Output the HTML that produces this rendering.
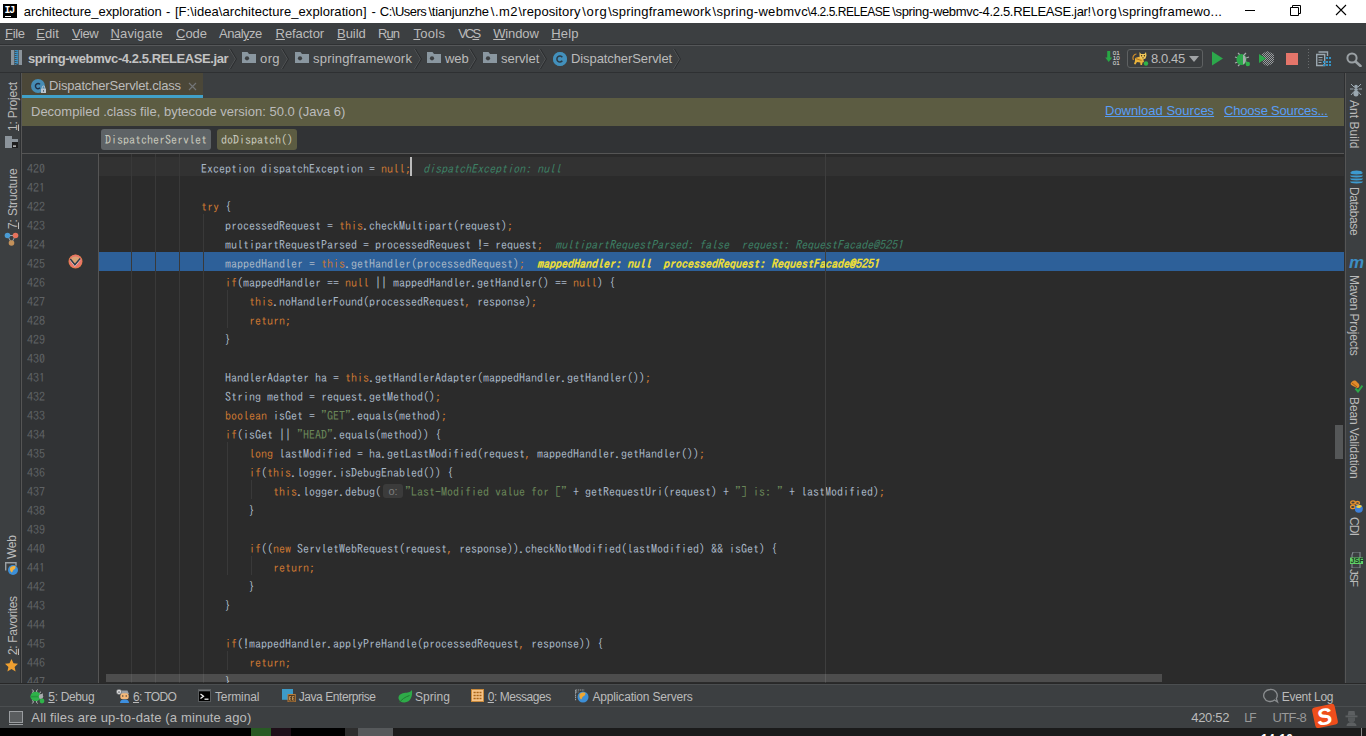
<!DOCTYPE html>
<html lang="en">
<head>
<meta charset="utf-8">
<title>architecture_exploration - DispatcherServlet.class</title>
<style>
*{box-sizing:border-box;margin:0;padding:0}
html,body{width:1366px;height:736px;overflow:hidden;background:#3c3f41}
body{position:relative;font-family:"Liberation Sans", "DejaVu Sans", sans-serif;font-size:13px;color:#bbbbbb;-webkit-font-smoothing:antialiased}
.abs{position:absolute}
u{text-decoration:underline;text-underline-offset:1px}
.vt u{text-underline-offset:0.5px}
/* title bar */
#title{position:absolute;left:0;top:0;width:1366px;height:23px;background:#ffffff;color:#000}
#title .txt{position:absolute;left:0;top:4px;font-size:13px;line-height:16px;white-space:pre}
#title .txt span{position:absolute;top:0;white-space:pre}
#ij{position:absolute;left:3px;top:4px;width:14px;height:14px;background:#000}
#ij b{position:absolute;left:1.5px;top:1.5px;font-family:'Liberation Mono',monospace;font-size:10px;line-height:9px;color:#fff;font-weight:bold;letter-spacing:-1.2px}
#ij i{position:absolute;left:2px;top:11.5px;width:6px;height:1px;background:#fff}
/* menu */
#menu{position:absolute;left:0;top:23px;width:1366px;height:22px;background:#3c3f41;border-bottom:1px solid #2f3133}
#menu span{position:absolute;top:2px;line-height:17px;font-size:13px;color:#bbbbbb;white-space:pre}
/* nav bar */
#nav{position:absolute;left:0;top:45px;width:1366px;height:28px;background:#3c3f41;border-top:1px solid #555759;border-bottom:1px solid #2e3032}
#nav .t{position:absolute;top:4px;line-height:17px;font-size:13px;color:#bbbbbb;white-space:pre}
/* strips */
#lstrip{position:absolute;left:0;top:73px;width:21px;height:611px;background:#3c3f41;border-right:1px solid #2e3032}
#rstrip{position:absolute;left:1344px;top:73px;width:22px;height:611px;background:#3c3f41;border-left:1px solid #2e3032}
.vt{position:absolute;white-space:pre;font-size:12px;line-height:14px;color:#bbbbbb;transform-origin:0 0}
/* tabs */
#tabs{position:absolute;left:22px;top:73px;width:1322px;height:25px;background:#3c3f41}
#tab{position:absolute;left:0;top:0;width:181px;height:25px;background:#4b4738;border-bottom:3px solid #41a0c8}
#tab .t{position:absolute;left:27px;top:5px;font-size:13px;line-height:16px;color:#bbbbbb;white-space:pre;letter-spacing:-0.17px}
/* banner */
#banner{position:absolute;left:22px;top:98px;width:1322px;height:28px;background:#5c5c42}
#banner .t{position:absolute;left:9px;top:6px;font-size:13px;line-height:16px;color:#bbbbbb;white-space:pre}
#banner a{position:absolute;top:5px;font-size:13px;line-height:16px;color:#589df6;text-decoration:underline;white-space:pre}
/* crumbs */
#crumbs{position:absolute;left:22px;top:126px;width:1322px;height:28px;background:#313335;border-bottom:1px solid #555555}
#crumbs span{position:absolute;top:3px;height:21px;line-height:21px;font-family:"IPAGothic", "Liberation Mono", monospace;font-size:12px;color:#c9c9bd;padding:0 4px;border-radius:3px;white-space:pre}
/* editor */
#ed{position:absolute;left:22px;top:154px;width:1322px;height:529px;background:#2b2b2b;overflow:hidden}
#gutter{position:absolute;left:0;top:0;width:77px;height:531px;background:#313335;border-right:1px solid #555555}
.row{position:absolute;left:0;width:1322px;height:19px}
.row.caret::before{content:"";position:absolute;left:77px;top:0;width:1245px;height:19px;background:#323232}
.row.exec::before{content:"";position:absolute;left:77px;top:0;width:1245px;height:19px;background:#2d6099}
.ln{position:absolute;left:5px;top:0;height:19px;line-height:22px;font-family:"IPAGothic", "Liberation Mono", monospace;font-size:12px;color:#606366}
.c{position:absolute;left:83px;top:0;height:19px;line-height:22px;font-family:"IPAGothic", "Liberation Mono", monospace;font-size:12px;color:#a9b7c6;white-space:pre}
.k{color:#cc7832}
.s{color:#6a8759}
.hint{color:#3d8065;font-style:italic;margin-left:12px}
.hint.hx{color:#f5e232;font-weight:normal;-webkit-text-stroke:0.45px #f5e232}
.ph{display:inline-block;background:#3b3b3b;color:#7d7d7d;border-radius:3px;font-size:11px;width:20px;text-align:center;margin:0 2px 0 2px;line-height:14px;height:14px;vertical-align:1px;font-family:"Liberation Sans", "DejaVu Sans", sans-serif}
.cur{position:absolute;left:388px;top:0;width:2px;height:19px;background:#bbbbbb}
.guide{position:absolute;width:1px;background:#393939}
/* bottom */
#tools{position:absolute;left:0;top:683px;width:1366px;height:23px;background:#3c3f41;border-top:1px solid #282828;box-shadow:inset 0 1px 0 #4b4e50}
#tools .t{position:absolute;top:5px;font-size:12px;line-height:16px;color:#bbbbbb;white-space:pre}
#status{position:absolute;left:0;top:706px;width:1366px;height:22px;background:#3c3f41;border-top:1px solid #4b4e50}
#status .t{position:absolute;top:3px;font-size:13px;line-height:16px;color:#bbbbbb;white-space:pre}
#taskbar{position:absolute;left:0;top:728px;width:1366px;height:8px;background:#1b1b1b}
</style>
</head>
<body>
<div id="title"><div id="ij"><b>IJ</b><i></i></div><div class="txt"><span style="left:23.700px;letter-spacing:-0.03px">architecture_exploration</span><span style="left:166px;letter-spacing:0px">-</span><span style="left:174.9px;letter-spacing:0.07px">[F:\idea\architecture_exploration]</span><span style="left:371.5px;letter-spacing:0px">-</span><span style="left:379.8px;letter-spacing:-0.51px">C:\Users</span><span style="left:428.4px;letter-spacing:-0.22px">\tianjunzhe</span><span style="left:490.8px;letter-spacing:0.47px">\.m2</span><span style="left:518.5px;letter-spacing:0.12px">\repository</span><span style="left:582.2px;letter-spacing:0.73px">\org</span><span style="left:608.3px;letter-spacing:0.2px">\springframework</span><span style="left:712.6px;letter-spacing:0.31px">\spring-webmvc</span><span style="left:807.600px;letter-spacing:-0.46px;font-size:12px">\4.2.5.RELEASE</span><span style="left:892.2px;letter-spacing:-0.33px">\spring-webmvc-4.2.5.RELEASE.jar!</span><span style="left:1092px;letter-spacing:0.8px">\org</span><span style="left:1118.3px;letter-spacing:0.24px">\springframewo...</span></div><svg class="abs" style="left:1240px;top:0" width="120" height="23" viewBox="0 0 120 23"><path d="M5 10.500h10" stroke="#000" stroke-width="1"/><path d="M50.500 7.500h8v8h-8z M52.500 7.500v-2h8v8h-2" fill="none" stroke="#000" stroke-width="1"/><path d="M96 5l10 10M106 5l-10 10" stroke="#000" stroke-width="1.100"/></svg></div>
<div id="menu"><span style="left:5.1px;letter-spacing:-0.33px"><u>F</u>ile</span><span style="left:36.3px;letter-spacing:0.07px"><u>E</u>dit</span><span style="left:72px;letter-spacing:-0.47px"><u>V</u>iew</span><span style="left:110.6px;letter-spacing:0.11px"><u>N</u>avigate</span><span style="left:176px;letter-spacing:0px"><u>C</u>ode</span><span style="left:219px;letter-spacing:-0.5px">Anal<u>y</u>ze</span><span style="left:275.6px;letter-spacing:-0.09px"><u>R</u>efactor</span><span style="left:337px;letter-spacing:-0.05px"><u>B</u>uild</span><span style="left:378px;letter-spacing:-1.0px">R<u>u</u>n</span><span style="left:413.4px;letter-spacing:0.3px"><u>T</u>ools</span><span style="left:458.2px;letter-spacing:-1.9px">VC<u>S</u></span><span style="left:493.2px;letter-spacing:-0.12px"><u>W</u>indow</span><span style="left:551.3px;letter-spacing:0.13px"><u>H</u>elp</span></div>
<div id="nav">
<svg class="abs" style="left:11px;top:4px" width="11" height="15" viewBox="0 0 11 15"><rect x="0" y="0" width="3.300" height="15" fill="#8b949c"/><rect x="7.700" y="0" width="3.300" height="15" fill="#8b949c"/><path d="M3.800 0.500h3.400M3.800 2.500l3.400-1M3.800 2.500h3.400M3.800 4.500l3.400-1M3.800 4.500h3.400M3.800 6.500l3.400-1M3.800 6.500h3.400M3.800 8.500l3.400-1M3.800 8.500h3.400M3.800 10.500l3.400-1M3.800 10.500h3.400M3.800 12.500l3.400-1M3.800 12.500h3.400M3.800 14.500l3.400-1" fill="none" stroke="#3aa0dc" stroke-width="0.800"/></svg>
<span class="t" style="left:28px;font-weight:bold;letter-spacing:-0.42px;color:#c3c3c3">spring-webmvc-4.2.5.RELEASE.jar</span>
<svg class="abs" style="left:229px;top:0" width="9" height="26" viewBox="0 0 9 26"><path d="M0.500 3L6.500 13L0.500 23" fill="none" stroke="#515456" stroke-width="1"/><path d="M1.500 3L7.500 13L1.500 23" fill="none" stroke="#2b2d2f" stroke-width="1"/></svg>
<svg class="abs" style="left:242px;top:6px" width="14" height="11" viewBox="0 0 14 11"><path d="M0 0h5.500l1.500 2h7v9h-14z" fill="#8a97a0"/><circle cx="5" cy="6.300" r="2.100" fill="#3c3f41"/></svg><span class="t" style="left:260px;letter-spacing:0.4px">org</span>
<svg class="abs" style="left:281px;top:0" width="9" height="26" viewBox="0 0 9 26"><path d="M0.500 3L6.500 13L0.500 23" fill="none" stroke="#515456" stroke-width="1"/><path d="M1.500 3L7.500 13L1.500 23" fill="none" stroke="#2b2d2f" stroke-width="1"/></svg>
<svg class="abs" style="left:295px;top:6px" width="14" height="11" viewBox="0 0 14 11"><path d="M0 0h5.500l1.500 2h7v9h-14z" fill="#8a97a0"/><circle cx="5" cy="6.300" r="2.100" fill="#3c3f41"/></svg><span class="t" style="left:313px;letter-spacing:0.2px">springframework</span>
<svg class="abs" style="left:414px;top:0" width="9" height="26" viewBox="0 0 9 26"><path d="M0.500 3L6.500 13L0.500 23" fill="none" stroke="#515456" stroke-width="1"/><path d="M1.500 3L7.500 13L1.500 23" fill="none" stroke="#2b2d2f" stroke-width="1"/></svg>
<svg class="abs" style="left:427px;top:6px" width="14" height="11" viewBox="0 0 14 11"><path d="M0 0h5.500l1.500 2h7v9h-14z" fill="#8a97a0"/><circle cx="5" cy="6.300" r="2.100" fill="#3c3f41"/></svg><span class="t" style="left:445px;letter-spacing:-0.1px">web</span>
<svg class="abs" style="left:469px;top:0" width="9" height="26" viewBox="0 0 9 26"><path d="M0.500 3L6.500 13L0.500 23" fill="none" stroke="#515456" stroke-width="1"/><path d="M1.500 3L7.500 13L1.500 23" fill="none" stroke="#2b2d2f" stroke-width="1"/></svg>
<svg class="abs" style="left:483px;top:6px" width="14" height="11" viewBox="0 0 14 11"><path d="M0 0h5.500l1.500 2h7v9h-14z" fill="#8a97a0"/><circle cx="5" cy="6.300" r="2.100" fill="#3c3f41"/></svg><span class="t" style="left:501px">servlet</span>
<svg class="abs" style="left:539px;top:0" width="9" height="26" viewBox="0 0 9 26"><path d="M0.500 3L6.500 13L0.500 23" fill="none" stroke="#515456" stroke-width="1"/><path d="M1.500 3L7.500 13L1.500 23" fill="none" stroke="#2b2d2f" stroke-width="1"/></svg>
<svg class="abs" style="left:553px;top:6px" width="14" height="14" viewBox="0 0 14 14"><circle cx="7" cy="7" r="7" fill="#3e86a0"/><circle cx="7" cy="7" r="7" fill="#4390bc"/><path d="M9.3 5.2A3 3 0 1 0 9.3 8.8" fill="none" stroke="#2b3a44" stroke-width="1.5"/></svg>
<span class="t" style="left:571px;letter-spacing:-0.09px">DispatcherServlet</span>
<svg class="abs" style="left:673px;top:0" width="9" height="26" viewBox="0 0 9 26"><path d="M0.500 3L6.500 13L0.500 23" fill="none" stroke="#515456" stroke-width="1"/><path d="M1.500 3L7.500 13L1.500 23" fill="none" stroke="#2b2d2f" stroke-width="1"/></svg>
<!-- right tools -->
<svg class="abs" style="left:1104px;top:4px" width="18" height="16" viewBox="0 0 18 16"><path d="M3.200 1h3v6.500h2L4.700 12 1.200 7.500h2z" fill="#28a745"/><g font-family="Liberation Sans, sans-serif" font-size="5.500" fill="#e2e2e2"><text x="8.800" y="5" textLength="7" lengthAdjust="spacingAndGlyphs">01</text><text x="8.800" y="10" textLength="7" lengthAdjust="spacingAndGlyphs">10</text><text x="8.800" y="15" textLength="7" lengthAdjust="spacingAndGlyphs">01</text></g></svg>
<div class="abs" style="left:1127px;top:3px;width:76px;height:19px;border:1px solid #5e6162;border-radius:3px;background:#393c3e"></div>
<svg class="abs" style="left:1132px;top:5px" width="17" height="15" viewBox="0 0 17 15"><path d="M1.500 9c-1.500-3 0.500-6 3-6" fill="none" stroke="#c98a2a" stroke-width="1.200"/><path d="M3 7l5-1.500 3 1.500 1 4-1.500 0.500-0.500 2.500h-1.500l-0.300-2.500-3.200-0.500-1.500 2.500-1.500-0.500 1-3z" fill="#e8b23c"/><path d="M3.500 7.500l6 2" stroke="#b5761a" stroke-width="1" fill="none"/><path d="M7.500 1l1.500 2h3.500l1.500-2 0.500 3.500-1 3-2.500 1-2.500-1-1-3z" fill="#f2c95a"/><circle cx="9.600" cy="4.800" r="0.700" fill="#3a2a10"/><circle cx="12.400" cy="4.800" r="0.700" fill="#3a2a10"/><path d="M10 6.500l1 0.700 1-0.700" stroke="#3a2a10" stroke-width="0.600" fill="none"/><circle cx="14" cy="12.500" r="2.200" fill="#2fb34a"/></svg>
<span class="t" style="left:1151px;letter-spacing:-0.4px">8.0.45</span>
<svg class="abs" style="left:1189px;top:10px" width="10" height="6" viewBox="0 0 10 6"><path d="M0 0h10L5 6z" fill="#a0a3a5"/></svg>
<svg class="abs" style="left:1211px;top:5px" width="12" height="15" viewBox="0 0 12 15"><path d="M1 0.500L12 7.500 1 14.500z" fill="#2ca84b"/></svg>
<svg class="abs" style="left:1234px;top:5px" width="18" height="16" viewBox="0 0 18 16"><path d="M4 2l2 2M12 2l-2 2M1 6l3 1M1 12l3-1M4 15l2-2M15 6l-3 1M15 12l-3-1" stroke="#a8abad" stroke-width="1.200" fill="none"/><ellipse cx="7.500" cy="8.500" rx="5" ry="5.500" fill="#2ca84b"/><path d="M9 3.500a5 5.500 0 0 1 0 10z" fill="#a8abad"/><circle cx="13.800" cy="13" r="2.200" fill="#2fb34a"/></svg>
<svg class="abs" style="left:1259px;top:5px" width="16" height="15" viewBox="0 0 16 15"><defs><pattern id="chk" width="2" height="2" patternUnits="userSpaceOnUse"><rect width="1" height="1" fill="#9a9d9f"/><rect x="1" y="1" width="1" height="1" fill="#9a9d9f"/></pattern></defs><path d="M8 0l7 3v6c0 3-3 5-7 6c-3-1-5-3-5-6v-6z" fill="url(#chk)"/><path d="M0 3l7 4.500L0 12z" fill="#2ca84b"/></svg>
<div class="abs" style="left:1286px;top:6.500px;width:12px;height:12px;background:#e5756a"></div>
<div class="abs" style="left:1308px;top:3px;width:1px;height:20px;background:repeating-linear-gradient(#6a6d6f 0 1px,transparent 1px 3px)"></div>
<svg class="abs" style="left:1316px;top:5px" width="15" height="16" viewBox="0 0 15 16"><path d="M2.500 1h9v4" fill="none" stroke="#9aa7b0" stroke-width="1.400"/><path d="M0.700 3.500h8v11h-8z" fill="none" stroke="#9aa7b0" stroke-width="1.400"/><path d="M2.500 6.500h4M2.500 9h4M2.500 11.500h3" stroke="#9aa7b0" stroke-width="1.200"/><g fill="#3592c4"><rect x="10" y="6" width="2" height="2"/><rect x="13" y="6" width="2" height="2"/><rect x="7" y="10" width="2" height="2"/><rect x="10" y="10" width="2" height="2"/><rect x="13" y="10" width="2" height="2"/><rect x="7" y="13" width="2" height="2"/><rect x="10" y="13" width="2" height="2"/><rect x="13" y="13" width="2" height="2"/></g></svg>
<svg class="abs" style="left:1346px;top:6px" width="16" height="15" viewBox="0 0 16 15"><circle cx="6" cy="6" r="4.600" fill="none" stroke="#9aa0a4" stroke-width="2"/><path d="M9.500 9.500L14.500 14" stroke="#9aa0a4" stroke-width="2.600" stroke-linecap="round"/></svg>
</div>
<div id="lstrip">
<span class="vt" style="left:6px;top:58px;transform:rotate(-90deg);letter-spacing:-0.17px"><u>1</u>: Project</span>
<svg class="abs" style="left:5px;top:63px" width="13" height="12" viewBox="0 0 13 12"><path d="M0 0h7v3h6v5h-6v4h-7z" fill="#8c949b"/><rect x="7" y="6" width="6" height="6" fill="#1e1e1e"/><rect x="8" y="9.500" width="3" height="1.200" fill="#e8e8e8"/></svg>
<span class="vt" style="left:6px;top:156px;transform:rotate(-90deg);letter-spacing:-0.12px"><u>7</u>: Structure</span>
<svg class="abs" style="left:4px;top:159px" width="15" height="15" viewBox="0 0 15 15"><path d="M3.500 3.500h8M3.500 3.500l4 7.500M11.500 3.500l-4 7.500" stroke="#9aa7b0" stroke-width="1" fill="none"/><circle cx="3.500" cy="3.500" r="2.800" fill="#4a9bd4"/><circle cx="11.500" cy="3.500" r="2.800" fill="#e8735c"/><circle cx="7.500" cy="11" r="2.800" fill="#c4915a"/></svg>
<span class="vt" style="left:5px;top:486px;transform:rotate(-90deg);letter-spacing:-0.30px">Web</span>
<svg class="abs" style="left:4px;top:488px" width="15" height="15" viewBox="0 0 15 15"><path d="M1.700 9.500V1.700h10.300v3" fill="none" stroke="#9aa0a4" stroke-width="1.400"/><circle cx="9" cy="9" r="5" fill="#3d8fd6"/><path d="M6 7c1-2 3.500-2.500 5.500-1.800c0.300 1.800-0.500 3-2 3.500c-0.800 1-0.800 2.300-1.800 2.800c-1-1-2.200-2.700-1.700-4.500z" fill="#f5b13c"/></svg>
<span class="vt" style="left:6px;top:582px;transform:rotate(-90deg);letter-spacing:-0.33px"><u>2</u>: Favorites</span>
<svg class="abs" style="left:5px;top:586px" width="13" height="13" viewBox="0 0 13 13"><path d="M6.500 0l2 4.300 4.500 0.500-3.400 3.100 1 4.600-4.100-2.400-4.100 2.400 1-4.600L0 4.800l4.500-0.500z" fill="#f0a030"/></svg>
</div>
<div id="rstrip">
<svg class="abs" style="left:5px;top:10px" width="12" height="14" viewBox="0 0 12 14"><path d="M1 1l3 3M11 1l-3 3M0 6h3.500M12 6h-3.500M1 12l3-3.500M11 12l-3-3.500M3 3l1.500 1.500M9 3l-1.500 1.500" stroke="#9aa7b0" stroke-width="1" fill="none"/><circle cx="6" cy="3.500" r="1.800" fill="#9aa7b0"/><ellipse cx="6" cy="6.500" rx="1.800" ry="1.600" fill="#9aa7b0"/><ellipse cx="6" cy="10.500" rx="2.600" ry="3" fill="#9aa7b0"/></svg>
<span class="vt" style="left:15.5px;top:27px;transform:rotate(90deg);letter-spacing:0.05px">Ant Build</span>
<svg class="abs" style="left:5px;top:97px" width="13" height="14" viewBox="0 0 13 14"><g fill="none" stroke="#3d9bd0" stroke-width="2"><path d="M1 2.500c0 1.300 11 1.300 11 0M1 5.500c0 1.300 11 1.300 11 0M1 8.500c0 1.300 11 1.300 11 0M1 11.500c0 1.300 11 1.300 11 0"/></g><ellipse cx="6.500" cy="2.200" rx="5.500" ry="1.700" fill="#3d9bd0"/></svg>
<span class="vt" style="left:15.5px;top:114px;transform:rotate(90deg);letter-spacing:-0.40px">Database</span>
<span class="abs" style="left:4px;top:184px;font:italic bold 17px 'Liberation Sans',sans-serif;color:#3d8ec4;line-height:12px;height:12px">m</span>
<span class="vt" style="left:15.5px;top:202px;transform:rotate(90deg);letter-spacing:-0.15px">Maven Projects</span>
<svg class="abs" style="left:5px;top:307px" width="13" height="13" viewBox="0 0 13 13"><path d="M1 3c1-2 3-3 5-2l3 3c1 2 0 4-2 4l-4-2c-2-1-3-2-2-3z" fill="#e08a2a"/><path d="M2 3l5 4" stroke="#a85a10" stroke-width="1"/><path d="M5.500 8.500l2.500 3 4.500-6" fill="none" stroke="#2ea84a" stroke-width="2"/></svg>
<span class="vt" style="left:15.5px;top:324px;transform:rotate(90deg);letter-spacing:-0.10px">Bean Validation</span>
<svg class="abs" style="left:5px;top:427px" width="13" height="13" viewBox="0 0 13 13"><ellipse cx="3" cy="2.500" rx="2.300" ry="1.700" fill="none" stroke="#e8932c" stroke-width="1.300"/><ellipse cx="2.800" cy="7" rx="2.300" ry="1.700" fill="none" stroke="#e8932c" stroke-width="1.300"/><ellipse cx="7.500" cy="3" rx="2" ry="1.500" fill="none" stroke="#e8932c" stroke-width="1.300"/><circle cx="8.800" cy="8.800" r="4" fill="#3d7fd8"/><path d="M6 7c1-2 4-3 6-1c-1 2-4 3-6 1z" fill="#f5d23a"/></svg>
<span class="vt" style="left:15.5px;top:444px;transform:rotate(90deg);letter-spacing:-0.80px">CDI</span>
<svg class="abs" style="left:4.500px;top:479px" width="14" height="16" viewBox="0 0 14 16"><path d="M3 0h7v16h-8v-13z" fill="none" stroke="#7d858b" stroke-width="1.200"/><rect x="0" y="5.500" width="13" height="6.500" fill="#5fd068"/><text x="0.600" y="11" font-family="Liberation Sans, sans-serif" font-size="7" font-weight="bold" fill="#1c3a1e" textLength="12.800" lengthAdjust="spacingAndGlyphs">JSF</text></svg>
<span class="vt" style="left:15.5px;top:495.500px;transform:rotate(90deg);letter-spacing:-1.20px;font-size:11.5px">JSF</span>
</div>
<div id="tabs"><div id="tab"><svg class="abs" style="left:9px;top:6px" width="16" height="16" viewBox="0 0 16 16"><circle cx="7" cy="7" r="7" fill="#468cb4"/><path d="M9 5.400A2.600 2.600 0 1 0 9 8.800" fill="none" stroke="#1f2f45" stroke-width="1.400"/><path d="M11.300 9.500v-1.300a1.200 1.200 0 0 1 2.400 0v1.300" fill="none" stroke="#b8c4d0" stroke-width="1"/><rect x="10" y="9.500" width="5" height="4.500" fill="#b8c4d0"/><rect x="12" y="11" width="1" height="1.800" fill="#5a6a78"/></svg><span class="t">DispatcherServlet.class</span><svg class="abs" style="left:166px;top:9px" width="9" height="9" viewBox="0 0 9 9"><path d="M1 1l7 7M8 1l-7 7" stroke="#737577" stroke-width="1.200"/></svg></div></div>
<div id="banner"><span class="t">Decompiled .class file, bytecode version: 50.0 (Java 6)</span><a style="left:1083px">Download Sources</a><a style="left:1202px;letter-spacing:-0.19px">Choose Sources...</a></div>
<div id="crumbs"><span style="left:79px;background:#5e6366">DispatcherServlet</span><span style="left:195px;background:#5c5c42">doDispatch()</span></div>
<div id="ed">
<div id="gutter"></div>
<div class="row caret" style="top:3px"><span class="ln">420</span><pre class="c">                Exception dispatchException = <span class="k">null</span><span class="k">;</span><span class="hint">dispatchException: null</span></pre><i class="cur"></i></div>
<div class="row" style="top:22px"><span class="ln">421</span><pre class="c"></pre></div>
<div class="row" style="top:41px"><span class="ln">422</span><pre class="c">                <span class="k">try</span> {</pre></div>
<div class="row" style="top:60px"><span class="ln">423</span><pre class="c">                    processedRequest = <span class="k">this</span>.checkMultipart(request)<span class="k">;</span></pre></div>
<div class="row" style="top:79px"><span class="ln">424</span><pre class="c">                    multipartRequestParsed = processedRequest != request<span class="k">;</span><span class="hint">multipartRequestParsed: false  request: RequestFacade@5251</span></pre></div>
<div class="row exec" style="top:98px"><span class="ln">425</span><pre class="c">                    mappedHandler = <span class="k">this</span>.getHandler(processedRequest)<span class="k">;</span><span class="hint hx">mappedHandler: null  processedRequest: RequestFacade@5251</span></pre></div>
<div class="row" style="top:117px"><span class="ln">426</span><pre class="c">                    <span class="k">if</span>(mappedHandler == <span class="k">null</span> || mappedHandler.getHandler() == <span class="k">null</span>) {</pre></div>
<div class="row" style="top:136px"><span class="ln">427</span><pre class="c">                        <span class="k">this</span>.noHandlerFound(processedRequest<span class="k">,</span> response)<span class="k">;</span></pre></div>
<div class="row" style="top:155px"><span class="ln">428</span><pre class="c">                        <span class="k">return</span><span class="k">;</span></pre></div>
<div class="row" style="top:174px"><span class="ln">429</span><pre class="c">                    }</pre></div>
<div class="row" style="top:193px"><span class="ln">430</span><pre class="c"></pre></div>
<div class="row" style="top:212px"><span class="ln">431</span><pre class="c">                    HandlerAdapter ha = <span class="k">this</span>.getHandlerAdapter(mappedHandler.getHandler())<span class="k">;</span></pre></div>
<div class="row" style="top:231px"><span class="ln">432</span><pre class="c">                    String method = request.getMethod()<span class="k">;</span></pre></div>
<div class="row" style="top:250px"><span class="ln">433</span><pre class="c">                    <span class="k">boolean</span> isGet = <span class="s">"GET"</span>.equals(method)<span class="k">;</span></pre></div>
<div class="row" style="top:269px"><span class="ln">434</span><pre class="c">                    <span class="k">if</span>(isGet || <span class="s">"HEAD"</span>.equals(method)) {</pre></div>
<div class="row" style="top:288px"><span class="ln">435</span><pre class="c">                        <span class="k">long</span> lastModified = ha.getLastModified(request<span class="k">,</span> mappedHandler.getHandler())<span class="k">;</span></pre></div>
<div class="row" style="top:307px"><span class="ln">436</span><pre class="c">                        <span class="k">if</span>(<span class="k">this</span>.logger.isDebugEnabled()) {</pre></div>
<div class="row" style="top:326px"><span class="ln">437</span><pre class="c">                            <span class="k">this</span>.logger.debug(<span class="ph">o:</span><span class="s">"Last-Modified value for ["</span> + getRequestUri(request) + <span class="s">"] is: "</span> + lastModified)<span class="k">;</span></pre></div>
<div class="row" style="top:345px"><span class="ln">438</span><pre class="c">                        }</pre></div>
<div class="row" style="top:364px"><span class="ln">439</span><pre class="c"></pre></div>
<div class="row" style="top:383px"><span class="ln">440</span><pre class="c">                        <span class="k">if</span>((<span class="k">new</span> ServletWebRequest(request<span class="k">,</span> response)).checkNotModified(lastModified) &amp;&amp; isGet) {</pre></div>
<div class="row" style="top:402px"><span class="ln">441</span><pre class="c">                            <span class="k">return</span><span class="k">;</span></pre></div>
<div class="row" style="top:421px"><span class="ln">442</span><pre class="c">                        }</pre></div>
<div class="row" style="top:440px"><span class="ln">443</span><pre class="c">                    }</pre></div>
<div class="row" style="top:459px"><span class="ln">444</span><pre class="c"></pre></div>
<div class="row" style="top:478px"><span class="ln">445</span><pre class="c">                    <span class="k">if</span>(!mappedHandler.applyPreHandle(processedRequest<span class="k">,</span> response)) {</pre></div>
<div class="row" style="top:497px"><span class="ln">446</span><pre class="c">                        <span class="k">return</span><span class="k">;</span></pre></div>
<div class="row" style="top:516px"><span class="ln">447</span><pre class="c">                    }</pre></div>
<i class="guide" style="left:109px;top:0;height:531px"></i><i class="guide" style="left:133px;top:0;height:531px"></i><i class="guide" style="left:157px;top:0;height:531px"></i>
<i class="guide" style="left:181px;top:60px;height:471px"></i>
<i class="guide" style="left:205px;top:136px;height:38px"></i>
<i class="guide" style="left:205px;top:288px;height:133px"></i>
<i class="guide" style="left:229px;top:326px;height:19px"></i>
<i class="guide" style="left:229px;top:402px;height:19px"></i>
<i class="guide" style="left:205px;top:497px;height:19px"></i>
<i class="abs" style="left:803px;top:0;width:1px;height:531px;background:#3e3e3e"></i>
<svg class="abs" style="left:46.100px;top:99.900px" width="15" height="15" viewBox="0 0 15 15"><circle cx="7.500" cy="7.500" r="7" fill="#e07f3a"/><circle cx="7.500" cy="7.300" r="6.500" fill="#e8766a"/><path d="M2.300 5.200L6.900 11L12.200 4.600A6.300 6.300 0 0 0 2.300 5.200z" fill="#d9a273"/><path d="M2.300 6L6.900 11.800L12.200 5.400" fill="none" stroke="#f4f4ec" stroke-width="1.100"/><path d="M2.300 5L6.900 10.800L12.200 4.400" fill="none" stroke="#2d3a48" stroke-width="1.500"/></svg>
<i class="abs" style="left:84px;top:520px;width:1056px;height:8px;background:rgba(255,255,255,0.16)"></i>
<i class="abs" style="left:1313px;top:271px;width:8px;height:34px;background:#555758"></i>

</div>
<i class="abs" style="left:21px;top:73px;width:1px;height:610px;background:#555555"></i><i class="abs" style="left:1345px;top:73px;width:1px;height:610px;background:#555555"></i>
<div id="tools">
<svg class="abs" style="left:30px;top:5px" width="15" height="15" viewBox="0 0 15 15"><path d="M2.300 0.500c1.200 1 1.200 2.300 0.300 3.300M7.500 0.500c-1.200 1-1.200 2.300-0.300 3.300M2.300 14.500c1.200-1 1.200-2.300 0.300-3.300M7.500 14.500c-1.200-1-1.200-2.300-0.300-3.300M11 3c-1.200 0.300-1.600 1-1.600 2M13 5c-1 0-1.600 0.500-2 1.200" stroke="#c8cacc" stroke-width="1" fill="none"/><ellipse cx="5.700" cy="7.500" rx="5.300" ry="4.700" fill="#2fb34a"/><rect x="0.600" y="6.800" width="9.500" height="1.600" fill="#249a3d"/><ellipse cx="11" cy="7.500" rx="2.200" ry="2.600" fill="#a8abad"/><circle cx="12" cy="12" r="2.400" fill="#2fb34a"/></svg>
<span class="t" style="left:48.300px;letter-spacing:-0.34px"><u>5</u>: Debug</span>
<svg class="abs" style="left:116px;top:5px" width="14" height="14" viewBox="0 0 14 14"><path d="M4 1.500h7.500l1.500 3.500h-9z" fill="#9aa0a6"/><rect x="4.300" y="4.200" width="8.400" height="6" rx="2.500" fill="#f5b878"/><path d="M4 14c0-2.600 1.500-3.600 4.500-3.600s4.500 1 4.500 3.600z" fill="#3d8fe0"/><circle cx="6.800" cy="7" r="0.700" fill="#333"/><circle cx="10.200" cy="7" r="0.700" fill="#333"/><circle cx="3" cy="2.800" r="2.600" fill="#f2f2f2" stroke="#55585a" stroke-width="0.700"/><path d="M1.700 2.300h2.600M1.700 3.500h2.600" stroke="#55585a" stroke-width="0.600"/></svg>
<span class="t" style="left:133px;letter-spacing:-0.63px"><u>6</u>: TODO</span>
<svg class="abs" style="left:198px;top:5px" width="13" height="13" viewBox="0 0 13 13"><rect width="13" height="13" fill="#000"/><rect x="0" y="0" width="13" height="2.300" fill="#6e7275"/><rect x="0.500" y="0.500" width="12" height="12" fill="none" stroke="#5a5d5f" stroke-width="1"/><path d="M2.500 5l3 2.300-3 2.300" fill="none" stroke="#f0f0f0" stroke-width="1.300"/><path d="M6.500 10.200h4" stroke="#f0f0f0" stroke-width="1.300"/></svg>
<span class="t" style="left:215px;letter-spacing:-0.14px">Terminal</span>
<svg class="abs" style="left:282px;top:5px" width="14" height="13" viewBox="0 0 14 13"><rect x="0" y="0" width="11" height="10.800" fill="#3d9bc8"/><rect x="6" y="5.500" width="7.300" height="7.400" fill="#4d3a22" stroke="#b5793a" stroke-width="1"/><path d="M9.200 7.500h-1.700v3.600h1.700M7.500 9.300h1.400M12.200 7.500h-1.700v3.600h1.700M10.500 9.300h1.400" stroke="#d9a05a" stroke-width="0.800" fill="none"/></svg>
<span class="t" style="left:298.700px;letter-spacing:-0.43px">Java Enterprise</span>
<svg class="abs" style="left:398px;top:5.500px" width="15" height="13" viewBox="0 0 15 13"><path d="M14 0c0.600 6-1 12-7.500 12.500c-3 0.200-5.500-1.500-6-4c-0.300-3 2-5 5.500-5.500c4-0.600 6-0.500 8-3z" fill="#2eaa48"/><path d="M1.500 12.500c2-3 5.500-5.500 10-7" stroke="#1f7a32" stroke-width="1" fill="none"/></svg>
<span class="t" style="left:415px;letter-spacing:0.04px">Spring</span>
<svg class="abs" style="left:471px;top:5px" width="13" height="13" viewBox="0 0 13 13"><rect x="0.500" y="0.500" width="12" height="12" fill="#f7c488" stroke="#c98a3c" stroke-width="1"/><path d="M2.500 3.500h8M2.500 6.500h8M2.500 9.500h8" stroke="#a8651a" stroke-width="1.400" stroke-dasharray="2.200 0.800"/></svg>
<span class="t" style="left:487.700px;letter-spacing:-0.44px"><u>0</u>: Messages</span>
<svg class="abs" style="left:575px;top:5px" width="14" height="14" viewBox="0 0 14 14"><path d="M0.500 1h9M0.500 3h3M0.500 1v11" stroke="#9aa0a4" stroke-width="1.200" fill="none" stroke-dasharray="1.500 0.700"/><circle cx="8" cy="8" r="5.500" fill="#3d8fd6"/><path d="M4.500 5.500c1-2 4-2.500 6-1.500c0 2-1 3-2.500 3.500c-1 1-1 2.500-2 3c-1-1-2-3-1.500-5z" fill="#f0a732"/></svg>
<span class="t" style="left:592.500px;letter-spacing:-0.17px">Application Servers</span>
<svg class="abs" style="left:1262px;top:3.500px" width="17" height="16" viewBox="0 0 17 16"><path d="M8 1.500a6.500 6 0 1 0 4.500 10.500l3 2-1.200-3.500A6.500 6 0 0 0 8 1.500z" fill="none" stroke="#8a8d8f" stroke-width="1.300"/></svg>
<span class="t" style="left:1281.700px;letter-spacing:-0.28px">Event Log</span>
</div>
<div id="status"><svg class="abs" style="left:9px;top:4px" width="14" height="14" viewBox="0 0 14 14"><rect x="0.500" y="0.500" width="13" height="11" fill="#5a5d5f" stroke="#9a9da0" stroke-width="1"/><path d="M0 13.500h14" stroke="#9a9da0" stroke-width="1"/></svg><span class="t" style="left:31.3px;letter-spacing:0.16px">All files are up-to-date (a minute ago)</span>
<span class="t" style="left:1191.2px;letter-spacing:-0.28px">420:52</span><span class="t" style="left:1244.3px;color:#999999;letter-spacing:-1.6px;font-size:12px">LF</span><span class="t" style="left:1272.6px;color:#999999;letter-spacing:-0.65px">UTF-8</span>
<svg class="abs" style="left:1308px;top:-6px" width="34" height="30" viewBox="0 0 34 30"><g transform="rotate(-12 17 15)"><rect x="5.500" y="4.500" width="23" height="21" rx="3" fill="#ee4e1c"/><text x="8.500" y="23.500" font-family="Liberation Sans, sans-serif" font-size="23" font-weight="bold" font-style="italic" fill="#ffffff">S</text></g></svg>
<svg class="abs" style="left:1345px;top:4px" width="13" height="15" viewBox="0 0 13 15"><path d="M3.500 0h6l0.800 4.500h-7.600z" fill="#5d6062"/><rect x="0.500" y="4.500" width="12" height="1.800" fill="#5d6062"/><path d="M3 6.300h7v3.200l-1.500 1.800h-4l-1.500-1.800z" fill="#55585a"/><path d="M1.500 15c0-2.500 2-3.700 5-3.700s5 1.200 5 3.700z" fill="#5d6062"/></svg>
</div>
<div id="taskbar"><i class="abs" style="left:0;top:0;width:345px;height:8px;background:#000"></i><i class="abs" style="left:251px;top:0;width:20px;height:8px;background:#285a24"></i><i class="abs" style="left:271px;top:0;width:20px;height:8px;background:#1e0f19"></i><i class="abs" style="left:345px;top:0;width:13px;height:8px;background:#2e2e2e"></i><i class="abs" style="left:358px;top:0;width:35px;height:8px;background:#56595b"></i><i class="abs" style="left:1361px;top:0;width:1px;height:8px;background:#8a8a8a"></i><span class="abs" style="left:1261px;top:4px;font-size:12px;font-weight:bold;line-height:14px;color:#fff;white-space:pre;letter-spacing:0.3px">14:10</span></div>
</body>
</html>
